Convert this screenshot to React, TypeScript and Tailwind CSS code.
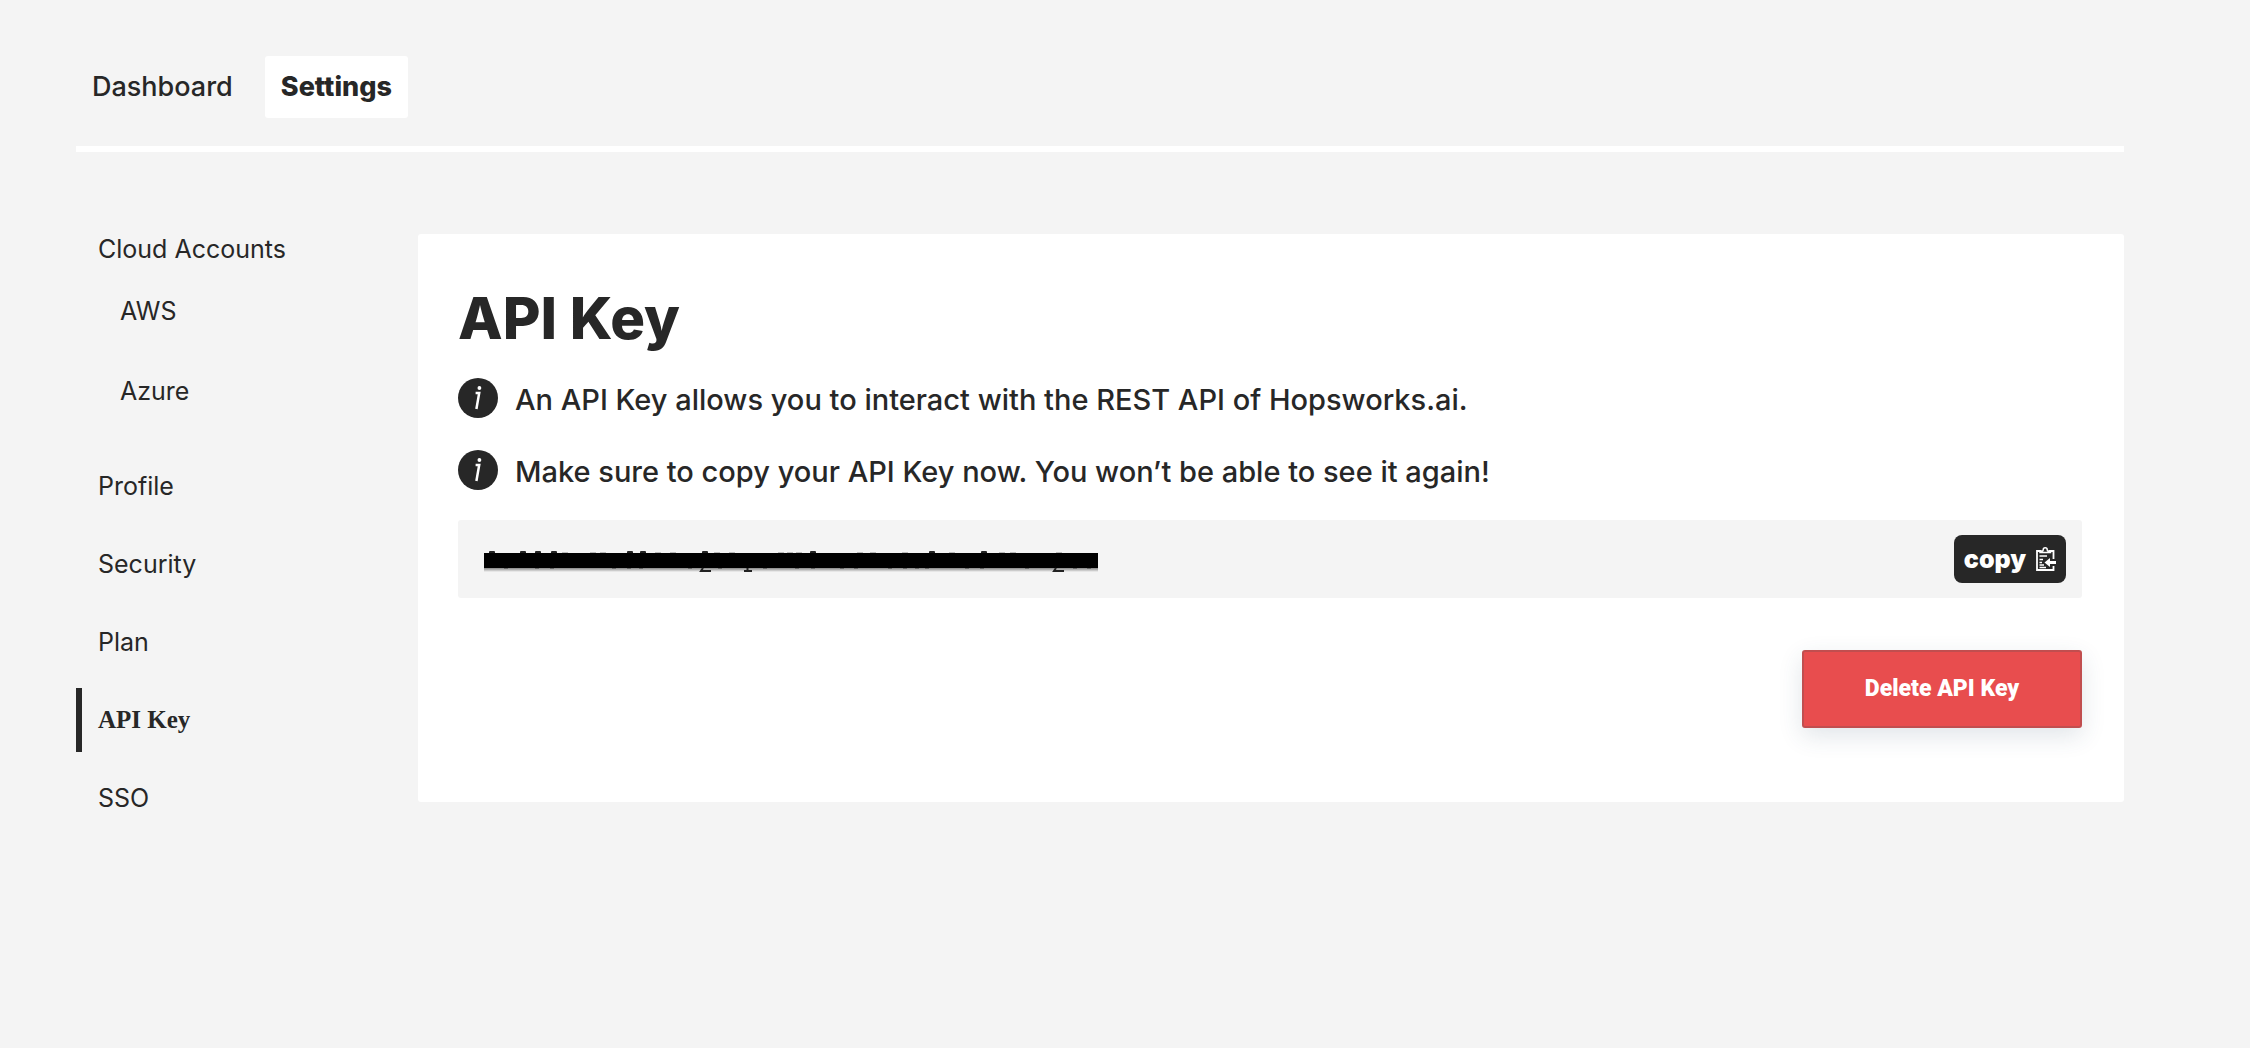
import React from "react";

const sans = "font-['Inter','Liberation_Sans',sans-serif]";

const tabs = [
  { label: "Dashboard", active: false },
  { label: "Settings", active: true },
];

const sections = ["Profile", "Security", "Plan", "API Key", "SSO"];

const notes = [
  "An API Key allows you to interact with the REST API of Hopsworks.ai.",
  "Make sure to copy your API Key now. You won’t be able to see it again!",
];

function InfoIcon() {
  return (
    <svg viewBox="0 0 40 40" className="size-10 shrink-0" aria-hidden="true">
      <circle cx="20" cy="20" r="20" fill="#272727" />
      <circle cx="21.4" cy="10" r="1.9" fill="#fff" />
      <path d="M17.600 15h3.600l-2.800 16" fill="none" stroke="#fff" strokeWidth="2.500" />
    </svg>
  );
}

function ClipboardIcon() {
  return (
    <svg viewBox="0 0 20 24" className="h-6 w-5 shrink-0" aria-hidden="true" fill="none" stroke="#fff">
      <path d="M5 4H1v19h16.500v-4M17.500 12V4H13" strokeWidth="1.800" />
      <path d="M4 5.500V4h2.500c.6 0 .7-.6.7-1.200C7.200 1.500 8 .8 9.200.8s2 .7 2 2c0 .6.2 1.200.8 1.200h2.500v1.500z" strokeWidth="1.500" />
      <path d="M3.500 9H11M3.500 12.500H7M3.500 15.500H6M3.500 18H8M3.500 20.500H10" strokeWidth="1.500" />
      <path d="M20 15.500h-8" strokeWidth="3" />
      <path d="M8.500 15.500l5.500-4.500v9z" fill="#fff" stroke="none" />
    </svg>
  );
}

const topMarks = [8, 39, 54, 70, 146, 159, 221, 329, 448, 500];
const faintTopMarks = [81, 109, 119, 174, 189, 233, 248, 297, 306, 315, 376, 389, 421, 468, 518, 529, 575];
const faintBottomMarks = [22, 53, 68, 130, 145, 157, 206, 236, 281, 313, 329, 358, 372, 406, 421, 433, 443, 483, 498, 543, 591, 605];

/* A solid bar over the key, with the edges of the hidden letters showing. */
function RedactedKey() {
  return (
    <svg viewBox="0 0 614 25" className="h-[25px] w-[614px]" role="img" aria-label="Hidden API key">
      <defs>
        <linearGradient id="bar-shadow" x1="0" y1="0" x2="0" y2="1">
          <stop offset="0" stopColor="#000" stopOpacity="0.45" />
          <stop offset="1" stopColor="#000" stopOpacity="0" />
        </linearGradient>
      </defs>
      {topMarks.map((x) => (
        <rect key={x} x={x - 3} y="4" width="6" height="3" rx="1" fill="#222" />
      ))}
      {faintTopMarks.map((x) => (
        <rect key={x} x={x - 3} y="5" width="6" height="1" fill="#bbb" />
      ))}
      <rect y="21" width="614" height="4" fill="url(#bar-shadow)" />
      {faintBottomMarks.map((x) => (
        <rect key={x} x={x - 2} y="21" width="4" height="1" fill="#666" />
      ))}
      <rect y="6" width="614" height="15" fill="#000" />
      <path d="M219 21l-2 3h10M263.500 21v3M260 24h8M572 21l-2 3h10" fill="none" stroke="#222" strokeWidth="2" />
    </svg>
  );
}

export default function App() {
  return (
    <div className={`min-h-screen bg-[#f4f4f4] pt-14 pr-[126px] pl-[76px] text-[#272727] ${sans}`}>
      <header className="border-b-6 border-white pb-7">
        <nav className="flex gap-4">
          {tabs.map((tab) => (
            <a
              key={tab.label}
              href="#"
              className={
                tab.active
                  ? "rounded-[3px] bg-white px-4 py-[15px] text-[27px] leading-8 font-extrabold"
                  : "rounded-[3px] px-4 py-[15px] text-[27px] leading-8 font-medium"
              }
            >
              {tab.label}
            </a>
          ))}
        </nav>
      </header>

      <div className="mt-[82px] flex items-start">
        <nav className="w-[342px] shrink-0 text-[25px] leading-[30px]">
          <a href="#" className="block pl-[22px]">Cloud Accounts</a>
          <div className="mt-8 mb-12 flex flex-col items-start gap-[50px] pl-[44px]">
            <a href="#">AWS</a>
            <a href="#">Azure</a>
          </div>
          <div className="flex flex-col gap-[14px]">
            {sections.map((name) => (
              <a
                key={name}
                href="#"
                className={
                  name === "API Key"
                    ? "flex h-16 items-center border-l-6 border-[#272727] pl-4 font-['Liberation_Serif',serif] font-bold"
                    : "flex h-16 items-center border-l-6 border-transparent pl-4"
                }
              >
                {name}
              </a>
            ))}
          </div>
        </nav>

        <main className="min-w-0 flex-1 rounded-[3px] bg-white pt-12 pr-[42px] pb-[74px] pl-10">
          <h1 className="text-[58px] leading-[72px] font-extrabold">API Key</h1>
          <div className="mt-6 flex flex-col gap-8">
            {notes.map((note) => (
              <p key={note} className="flex h-10 items-start gap-[17px] text-[29px] leading-[44px] font-medium">
                <InfoIcon />
                <span>{note}</span>
              </p>
            ))}
          </div>

          <div className="mt-[30px] flex items-center justify-between rounded-[3px] bg-[#f4f4f4] py-[15px] pr-4 pl-[26px]">
            <RedactedKey />
            <button type="button" className="flex h-12 w-28 items-center justify-center gap-2.5 rounded-lg bg-[#272727] text-[25px] leading-8 font-black text-white">
              copy
              <ClipboardIcon />
            </button>
          </div>

          <div className="mt-[52px] flex justify-end">
            <button
              type="button"
              className="h-[78px] w-[280px] rounded-[3px] border-2 border-[#c14e4f] bg-[#e84d4e] font-[Roboto,sans-serif] text-[23px] font-black text-white shadow-[0_8px_24px_rgba(40,70,100,0.14)]"
            >
              Delete API Key
            </button>
          </div>
        </main>
      </div>
    </div>
  );
}
